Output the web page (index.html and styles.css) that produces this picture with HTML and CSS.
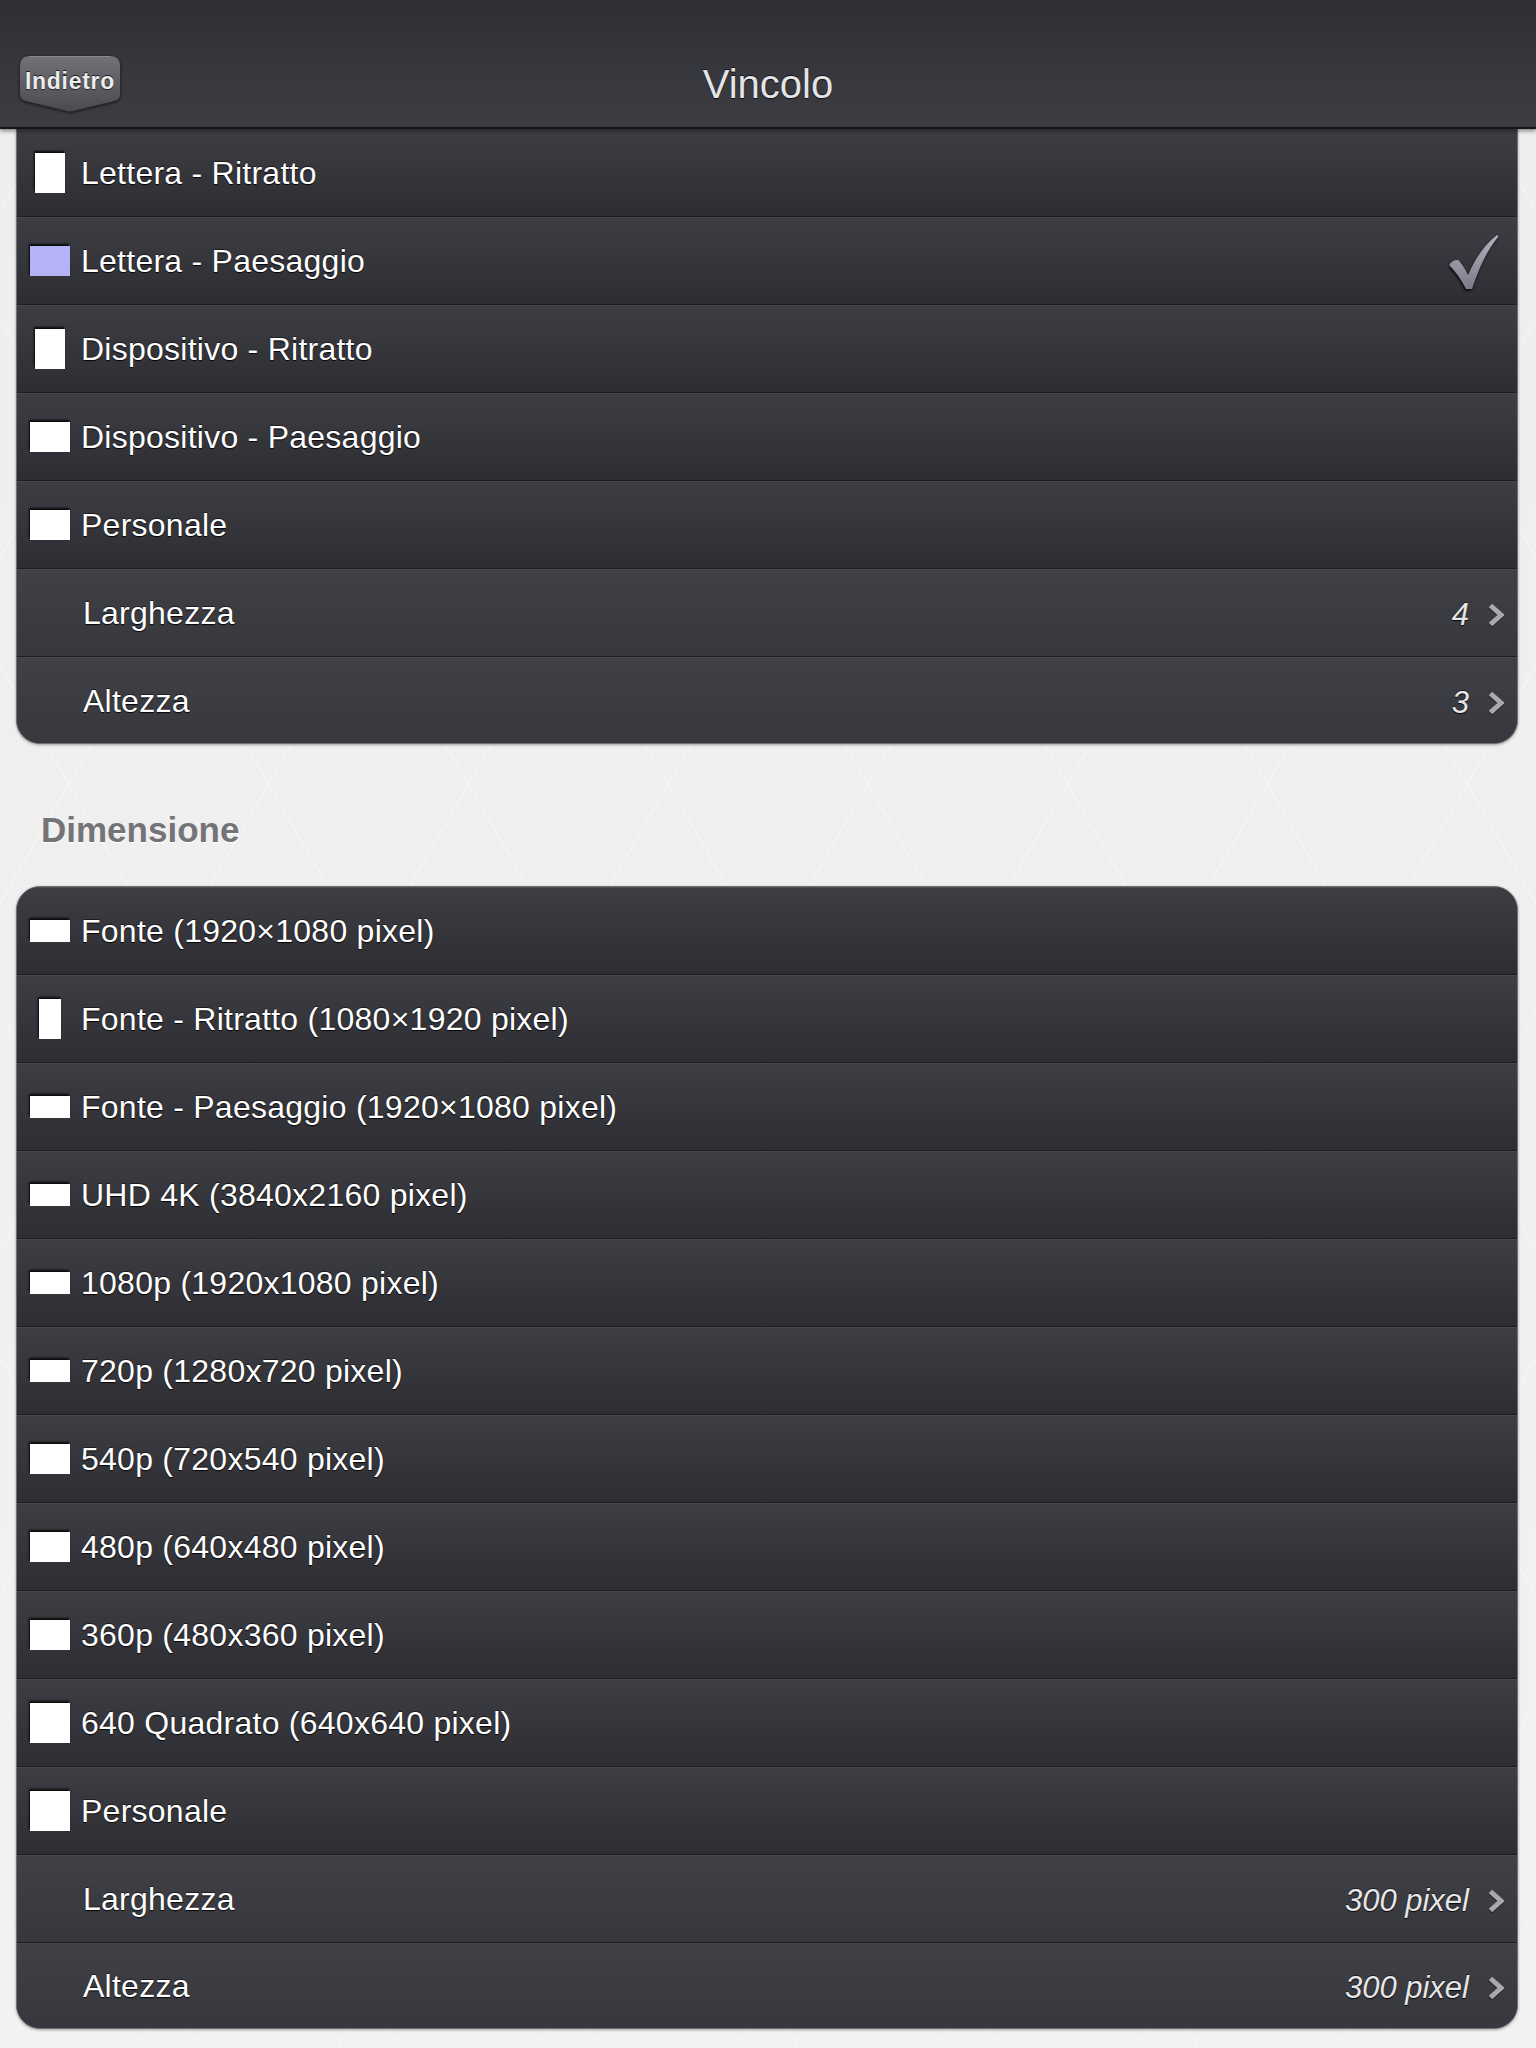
FILE: index.html
```html
<!DOCTYPE html>
<html lang="it">
<head>
<meta charset="utf-8">
<title>Vincolo</title>
<link rel="stylesheet" href="styles.css">
</head>
<body>
<header class="navbar">
  <div class="nav-left">
    <a class="back-btn">
      <svg class="back-shape" width="102" height="58" viewBox="0 0 102 58">
        <defs>
          <linearGradient id="bg" x1="0" y1="0" x2="0" y2="1">
            <stop offset="0" stop-color="#727278"/>
            <stop offset="1" stop-color="#4a4a50"/>
          </linearGradient>
        </defs>
        <path d="M11 0.5 H91 Q101.5 0.5 101.5 11 V39 Q101.5 45 95 46.5 L51 57 L7 46.5 Q0.5 45 0.5 39 V11 Q0.5 0.5 11 0.5 Z" fill="url(#bg)" stroke="#2a2a2f" stroke-width="1"/>
        <path d="M11 1.5 H91" stroke="#8a8a90" stroke-width="1"/>
      </svg>
      <span class="back-label">Indietro</span>
    </a>
  </div>
  <h1 class="nav-title">Vincolo</h1>
  <div class="nav-right"></div>
</header>

<main class="content">
  <section class="panel panel-top">
    <div class="row option"><span class="icon-box"><span class="shape s-30x40"></span></span><span class="label">Lettera - Ritratto</span></div>
    <div class="row option"><span class="icon-box"><span class="shape s-40x30 selected"></span></span><span class="label">Lettera - Paesaggio</span>
      <svg class="check" width="50" height="56" viewBox="0 0 50 56">
        <defs>
          <linearGradient id="cg" x1="0" y1="0" x2="0" y2="1">
            <stop offset="0" stop-color="#b2b2bf"/>
            <stop offset="1" stop-color="#7b7b89"/>
          </linearGradient>
        </defs>
        <path d="M0 31 Q4 25.5 9 26 Q13 29 19 41 Q30 15 48 1 L49.5 2.5 Q34 21 23 55 L17 55 Q10 41 0 31 Z" fill="#121216" transform="translate(-1 1)"/>
        <path d="M0 31 Q4 25.5 9 26 Q13 29 19 41 Q30 15 48 1 L49.5 2.5 Q34 21 23 55 L17 55 Q10 41 0 31 Z" fill="url(#cg)"/>
      </svg>
    </div>
    <div class="row option"><span class="icon-box"><span class="shape s-30x40"></span></span><span class="label">Dispositivo - Ritratto</span></div>
    <div class="row option"><span class="icon-box"><span class="shape s-40x30"></span></span><span class="label">Dispositivo - Paesaggio</span></div>
    <div class="row option"><span class="icon-box"><span class="shape s-40x30"></span></span><span class="label">Personale</span></div>
    <div class="row value-row"><span class="label">Larghezza</span><span class="value">4</span>
      <svg class="chev" width="16" height="24" viewBox="0 0 16 24"><path d="M2.5 2.5 L13 12 L2.5 21.5" fill="none" stroke="#a9a9a9" stroke-width="5" stroke-linejoin="miter"/></svg></div>
    <div class="row value-row last"><span class="label">Altezza</span><span class="value">3</span>
      <svg class="chev" width="16" height="24" viewBox="0 0 16 24"><path d="M2.5 2.5 L13 12 L2.5 21.5" fill="none" stroke="#a9a9a9" stroke-width="5" stroke-linejoin="miter"/></svg></div>
  </section>

  <h2 class="section-title">Dimensione</h2>

  <section class="panel panel-bottom">
    <div class="row option first"><span class="icon-box"><span class="shape s-40x22"></span></span><span class="label">Fonte (1920×1080 pixel)</span></div>
    <div class="row option"><span class="icon-box"><span class="shape s-22x40"></span></span><span class="label">Fonte - Ritratto (1080×1920 pixel)</span></div>
    <div class="row option"><span class="icon-box"><span class="shape s-40x22"></span></span><span class="label">Fonte - Paesaggio (1920×1080 pixel)</span></div>
    <div class="row option"><span class="icon-box"><span class="shape s-40x22"></span></span><span class="label">UHD 4K (3840x2160 pixel)</span></div>
    <div class="row option"><span class="icon-box"><span class="shape s-40x22"></span></span><span class="label">1080p (1920x1080 pixel)</span></div>
    <div class="row option"><span class="icon-box"><span class="shape s-40x22"></span></span><span class="label">720p (1280x720 pixel)</span></div>
    <div class="row option"><span class="icon-box"><span class="shape s-40x30"></span></span><span class="label">540p (720x540 pixel)</span></div>
    <div class="row option"><span class="icon-box"><span class="shape s-40x30"></span></span><span class="label">480p (640x480 pixel)</span></div>
    <div class="row option"><span class="icon-box"><span class="shape s-40x30"></span></span><span class="label">360p (480x360 pixel)</span></div>
    <div class="row option"><span class="icon-box"><span class="shape s-40x40"></span></span><span class="label">640 Quadrato (640x640 pixel)</span></div>
    <div class="row option"><span class="icon-box"><span class="shape s-40x40"></span></span><span class="label">Personale</span></div>
    <div class="row value-row"><span class="label">Larghezza</span><span class="value">300 pixel</span>
      <svg class="chev" width="16" height="24" viewBox="0 0 16 24"><path d="M2.5 2.5 L13 12 L2.5 21.5" fill="none" stroke="#a9a9a9" stroke-width="5" stroke-linejoin="miter"/></svg></div>
    <div class="row value-row last"><span class="label">Altezza</span><span class="value">300 pixel</span>
      <svg class="chev" width="16" height="24" viewBox="0 0 16 24"><path d="M2.5 2.5 L13 12 L2.5 21.5" fill="none" stroke="#a9a9a9" stroke-width="5" stroke-linejoin="miter"/></svg></div>
  </section>
</main>
</body>
</html>
```

FILE: styles.css
```css
* { box-sizing: border-box; }

html, body {
  margin: 0;
  padding: 0;
}

body {
  width: 1536px;
  min-height: 2048px;
  font-family: "Liberation Sans", Arial, sans-serif;
  background-color: #efefef;
  background-image:
    repeating-linear-gradient(60deg, transparent 0 172px, rgba(255,255,255,0.45) 172px 173px),
    repeating-linear-gradient(-60deg, transparent 0 172px, rgba(255,255,255,0.45) 172px 173px),
    linear-gradient(180deg, #eeeeee, #f2f2f2);
}

/* ---------- nav bar ---------- */
.navbar {
  height: 129px;
  display: grid;
  grid-template-columns: 1fr auto 1fr;
  align-items: start;
  background: linear-gradient(180deg, #2e2e35 0%, #37373e 55%, #3c3c43 100%);
  border-bottom: 2px solid #141417;
  box-shadow: 0 2px 4px rgba(0,0,0,0.45);
  position: relative;
  z-index: 2;
}

.nav-left {
  padding: 55px 0 0 19px;
}

.back-btn {
  position: relative;
  width: 102px;
  height: 58px;
  display: block;
}

.back-shape {
  position: absolute;
  left: 0;
  top: 0;
  filter: drop-shadow(0 1px 1px rgba(0,0,0,0.5));
}

.back-label {
  position: relative;
  display: block;
  padding-top: 12px;
  text-align: center;
  font-family: "Liberation Sans", Arial, sans-serif;
  font-weight: bold;
  font-size: 23px;
  letter-spacing: 0.7px;
  line-height: 28px;
  color: #ececec;
  text-shadow: 0 -1px 0 #1c1c20, 0 1px 1px rgba(0,0,0,0.6);
}

.nav-title {
  margin: 0;
  padding-top: 61px;
  font-weight: normal;
  font-size: 40px;
  line-height: 46px;
  color: #e4e4e6;
  text-shadow: 0 1px 1px #111114, 0 -1px 0 #15151a;
}

/* ---------- content ---------- */
.content {
  padding: 0 18px 17px 16px;
}

.panel {
  background: #35353c;
  border: 1px solid #6f6f74;
  box-shadow: 0 1px 3px rgba(0,0,0,0.35);
  border-radius: 0 0 24px 24px;
  overflow: hidden;
}

.panel-top {
  border-top: 0;
}

.panel-bottom {
  border-radius: 24px;
}

.row {
  height: 88px;
  display: flex;
  align-items: center;
  border-top: 1px solid #47474e;
  border-bottom: 1px solid #1d1d21;
  padding: 0 13px 0 13px;
}

.row.option {
  background: linear-gradient(180deg, #3d3d44 0%, #36363d 45%, #2d2d33 100%);
}

.row.first {
  border-top: 1px solid #4d4d54;
}

.row.value-row {
  background: linear-gradient(180deg, #404147 0%, #3b3c42 50%, #37383e 100%);
  padding-left: 66px;
}

.row.last {
  border-bottom: 0;
  height: 86px;
}

.panel-bottom .row.last {
  height: 85px;
}

.icon-box {
  width: 40px;
  height: 40px;
  flex: none;
  display: flex;
  align-items: center;
  justify-content: center;
  margin-right: 11px;
}

.shape {
  display: block;
  background: #ffffff;
  box-shadow: -1px -2px 2px rgba(0,0,0,0.85);
}

.shape.selected {
  background: #b3b3f6;
}

.s-30x40 { width: 30px; height: 40px; }
.s-40x30 { width: 40px; height: 30px; }
.s-40x22 { width: 40px; height: 22px; }
.s-22x40 { width: 22px; height: 40px; }
.s-40x40 { width: 40px; height: 40px; }

.label {
  flex: 1;
  font-size: 32px;
  line-height: 38px;
  letter-spacing: 0.25px;
  color: #ffffff;
  text-shadow: 0 1px 1px rgba(0,0,0,0.9), 0 -1px 0 rgba(0,0,0,0.5);
  white-space: nowrap;
}

.value {
  font-size: 31px;
  font-style: italic;
  line-height: 38px;
  color: #e6e6e8;
  text-shadow: 0 1px 1px rgba(0,0,0,0.9), 0 -1px 0 rgba(0,0,0,0.5);
  margin-right: 19px;
  margin-top: 4px;
}

.chev {
  flex: none;
  margin-top: 4px;
  filter: drop-shadow(0 1px 0 rgba(0,0,0,0.6));
}

.check {
  flex: none;
  margin-right: 5px;
  margin-top: 2px;
  filter: drop-shadow(0 1px 1px rgba(0,0,0,0.6));
}

.section-title {
  margin: 66px 0 36px 25px;
  font-size: 35px;
  line-height: 40px;
  font-weight: bold;
  color: #747477;
  text-shadow: 0 1px 0 #ffffff;
}
```
